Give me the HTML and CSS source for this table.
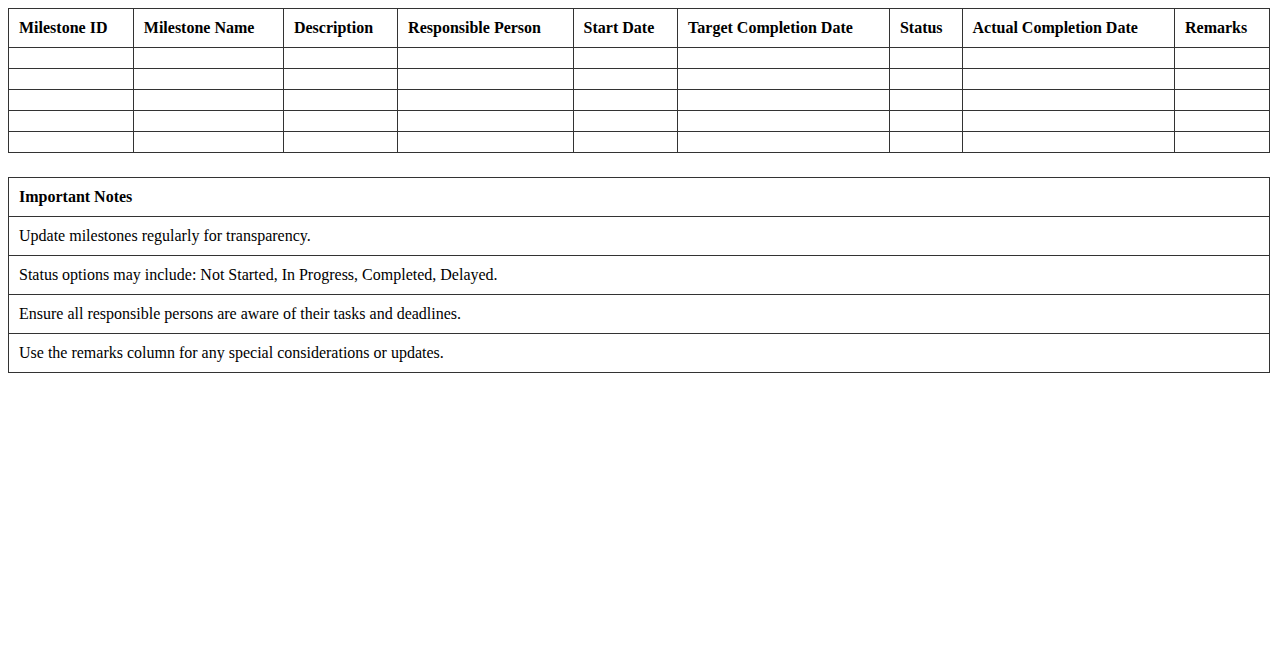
FILE: index.html
```html
<!DOCTYPE html>
<html>
<head>
<meta charset="utf-8">
<link rel="stylesheet" href="styles.css">
</head>
<body>
<table class="grid">
  <thead>
    <tr>
      <th>Milestone ID</th>
      <th>Milestone Name</th>
      <th>Description</th>
      <th>Responsible Person</th>
      <th>Start Date</th>
      <th>Target Completion Date</th>
      <th>Status</th>
      <th>Actual Completion Date</th>
      <th>Remarks</th>
    </tr>
  </thead>
  <tbody>
    <tr><td></td><td></td><td></td><td></td><td></td><td></td><td></td><td></td><td></td></tr>
    <tr><td></td><td></td><td></td><td></td><td></td><td></td><td></td><td></td><td></td></tr>
    <tr><td></td><td></td><td></td><td></td><td></td><td></td><td></td><td></td><td></td></tr>
    <tr><td></td><td></td><td></td><td></td><td></td><td></td><td></td><td></td><td></td></tr>
    <tr><td></td><td></td><td></td><td></td><td></td><td></td><td></td><td></td><td></td></tr>
  </tbody>
</table>
<table class="grid notes">
  <thead>
    <tr><th>Important Notes</th></tr>
  </thead>
  <tbody>
    <tr><td>Update milestones regularly for transparency.</td></tr>
    <tr><td>Status options may include: Not Started, In Progress, Completed, Delayed.</td></tr>
    <tr><td>Ensure all responsible persons are aware of their tasks and deadlines.</td></tr>
    <tr><td>Use the remarks column for any special considerations or updates.</td></tr>
  </tbody>
</table>
</body>
</html>
```
FILE: styles.css
```css
body {
  margin: 8px;
  font-family: "Liberation Serif", "Times New Roman", serif;
  font-size: 16px;
  color: #000;
  background: #fff;
}
.grid {
  width: 100%;
  border-collapse: collapse;
}
.grid th,
.grid td {
  border: 1px solid #333;
  padding: 10px;
  text-align: left;
  line-height: 18px;
}
.grid th {
  font-weight: bold;
}
.notes {
  margin-top: 24px;
}
```
